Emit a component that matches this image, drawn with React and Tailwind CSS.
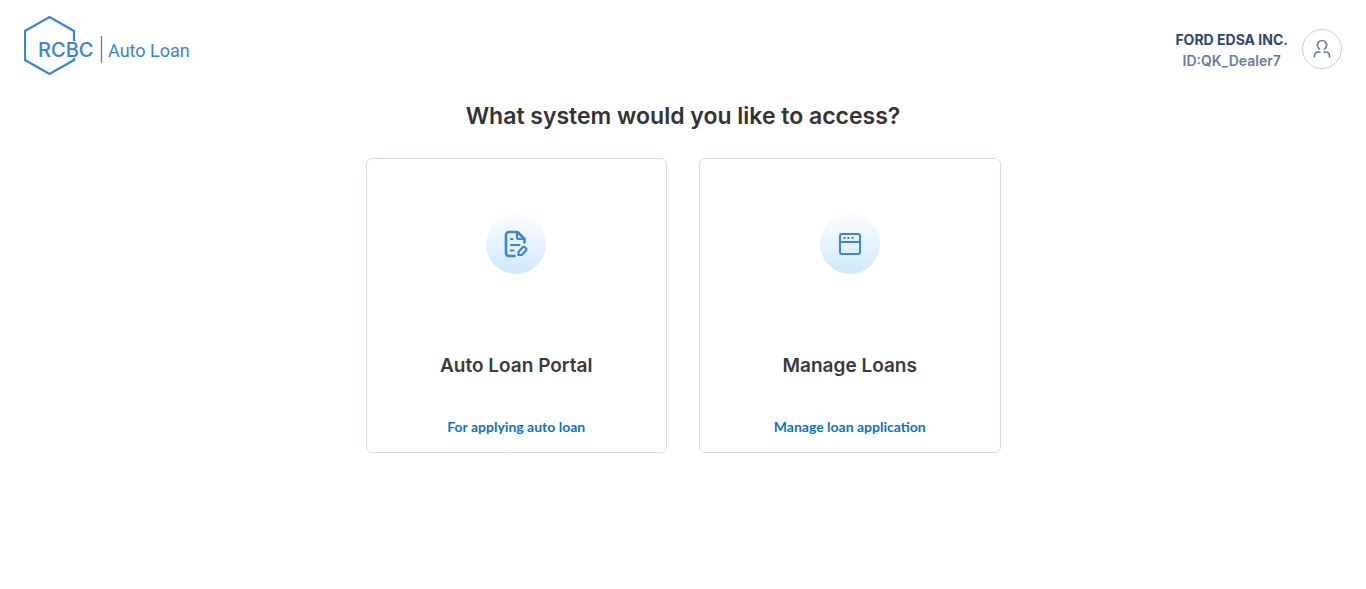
const cards = [
  { title: "Auto Loan Portal", note: "For applying auto loan", icon: DocumentIcon },
  { title: "Manage Loans", note: "Manage loan application", icon: WindowIcon },
];

function DocumentIcon() {
  return (
    <svg viewBox="0 0 28 28" className="size-7" fill="none" stroke="#3a84d6" strokeWidth="2.6" strokeLinecap="round" strokeLinejoin="round" aria-hidden="true">
      <path d="M12.5 26H7a3 3 0 0 1-3-3V5a3 3 0 0 1 3-3h8.500l7 7v3.500" />
      <path d="M15 2.500V7a2 2 0 0 0 2 2h5" strokeWidth="2.2" />
      <path d="M9 9h1.500M9 15h8.500M9 20.500h2.500" strokeWidth="2.2" />
      <path d="m16.500 22 4.200-4.700a1.500 1.500 0 0 1 2.200 0l1 1a1.500 1.500 0 0 1 0 2.200L19.800 25h-3.300z" strokeWidth="2.200" />
    </svg>
  );
}

function WindowIcon() {
  return (
    <svg viewBox="0 0 28 28" className="size-7" fill="none" stroke="#3a84d6" strokeWidth="2" aria-hidden="true">
      <rect x="4" y="4" width="20" height="20" rx="2" />
      <path d="M4 12h20" />
      <path d="M7.500 8h2M11.500 8h2M15.500 8h2" />
    </svg>
  );
}

function Logo() {
  return (
    <a href="#" aria-label="RCBC Auto Loan" className="block">
      <svg viewBox="0 0 170 62" className="h-[62px] w-[170px]" fill="none" stroke="#3a84d6">
        <path d="M50 26V16L25.500 2 1 16v29l24.500 14L50 45v-2" strokeWidth="2.2" />
        <path d="M77.500 21v27" strokeWidth="1.300" />
        <text x="14" y="42" fill="#3a84d6" stroke="none" className="font-['Inter',sans-serif] text-[20px] font-medium">RCBC</text>
        <text x="84" y="42" fill="#3a84d6" stroke="none" className="font-['Roboto',sans-serif] text-[18px]">Auto Loan</text>
      </svg>
    </a>
  );
}

export default function App() {
  return (
    <div className="bg-white font-['Inter',sans-serif]">
      <header className="flex items-start justify-between px-6 pt-[15px]">
        <Logo />
        <div className="flex items-start gap-[14px] pt-[14px]">
          <div className="text-center text-[14px] leading-[21px]">
            <p className="font-bold text-[#2c4770]">FORD EDSA INC.</p>
            <p className="font-semibold text-[#667d9d]">ID:QK_Dealer7</p>
          </div>
          <button type="button" aria-label="Account" className="flex size-10 items-center justify-center rounded-full border border-[#cccccc]">
            <svg viewBox="0 0 20 20" className="size-5" fill="none" stroke="#667d9d" strokeWidth="1.600" strokeLinecap="round" aria-hidden="true">
              <path d="M7.500 10a4.600 4.600 0 1 1 5 0" />
              <path d="M2.500 18v-1q0-4 4-4H8M17.500 18v-1q0-4-4-4H12" />
            </svg>
          </button>
        </div>
      </header>
      <main className="flex flex-col items-center px-6 pt-[25px]">
        <h1 className="text-[23px] leading-7 font-semibold text-[#333333]">What system would you like to access?</h1>
        <div className="mt-7 grid w-full max-w-[635px] grid-cols-2 gap-8">
          {cards.map(({ title, note, icon: Icon }) => (
            <a key={title} href="#" className="flex flex-col items-center rounded-md border border-[#d9dde8] pt-[55px] pb-[15px]">
              <span className="flex size-[60px] items-center justify-center rounded-full bg-linear-to-b from-[#fafdff] to-[#cfe9fd]">
                <Icon />
              </span>
              <h2 className="mt-20 text-[19px] leading-6 font-semibold text-[#3a3a3a]">{title}</h2>
              <p className="mt-[39px] font-['Lato',sans-serif] text-[14px] leading-5 font-bold text-[#0b72cc]">{note}</p>
            </a>
          ))}
        </div>
      </main>
    </div>
  );
}
